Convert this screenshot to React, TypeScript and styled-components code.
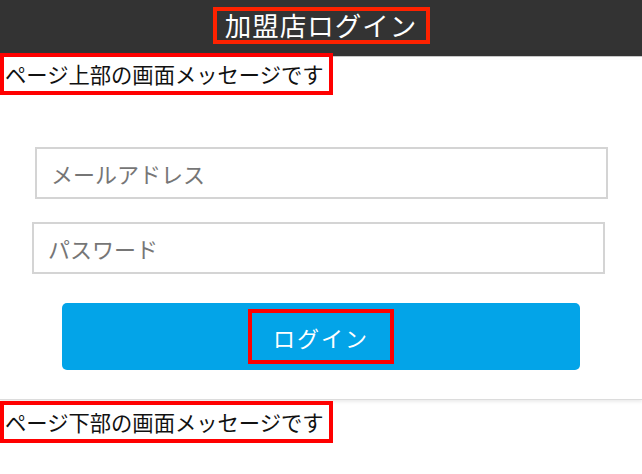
import React, { FC } from 'react'
import styled, { createGlobalStyle } from 'styled-components'

const GlobalStyle = createGlobalStyle`
    html, body {
        margin: 0;
        padding: 0;
        background: #ffffff;
    }
    body {
        font-family: "Noto Sans CJK JP", "Noto Sans", sans-serif;
        color: #222222;
    }
`;

const App: FC = () => {
    return (
        <>
            <GlobalStyle />
            <Header>
                <HeaderTitle>加盟店ログイン</HeaderTitle>
            </Header>
            <Card>
                <Message>ページ上部の画面メッセージです</Message>
                <LoginForm onSubmit={(e) => e.preventDefault()}>
                    <TextInput type="email" placeholder="メールアドレス" $shift={35} />
                    <TextInput type="password" placeholder="パスワード" $shift={32} />
                    <SubmitButton type="submit">
                        <ButtonLabel>ログイン</ButtonLabel>
                    </SubmitButton>
                </LoginForm>
            </Card>
            <Footer>
                <Message>ページ下部の画面メッセージです</Message>
            </Footer>
        </>
    )
}

const Header = styled.header`
    height: 57px;
    background-color: #333333;
    border-bottom: 1px solid #c8c8c8;
    display: flex;
    justify-content: center;
    align-items: flex-start;
    padding-top: 7px;
    box-sizing: border-box;
`;

const HeaderTitle = styled.h1`
    margin: 0;
    box-sizing: border-box;
    width: 217px;
    height: 37px;
    border: 4px solid #ff2200;
    color: #ffffff;
    font-size: 26.5px;
    font-weight: 400;
    line-height: 28px;
    letter-spacing: 1px;
    text-align: center;
    white-space: nowrap;
`;

const Card = styled.main`
    background: #ffffff;
    border-bottom: 1px solid #dcdcdc;
    box-shadow: 0 2px 3px rgba(0, 0, 0, 0.08);
    padding-bottom: 29px;
`;

const Message = styled.p`
    display: inline-block;
    margin: 0 0 0 4px;
    padding: 0 5px 0 1px;
    height: 34px;
    outline: 4px solid #ff0000;
    font-size: 21.3px;
    line-height: 34px;
    color: #111111;
    white-space: nowrap;
    position: relative;
`;

const LoginForm = styled.form`
    display: flex;
    flex-direction: column;
    align-items: flex-start;
    gap: 23px;
    padding-top: 56px;
`;

const TextInput = styled.input<{ $shift: number }>`
    box-sizing: border-box;
    width: 573px;
    height: 52px;
    margin-left: ${({ $shift }) => $shift}px;
    padding: 0 14px;
    border: 2px solid #d4d4d4;
    border-radius: 0;
    outline: none;
    font-family: inherit;
    font-size: 22px;
    color: #333333;
    background: #ffffff;

    &::placeholder {
        color: #767676;
    }
`;

const SubmitButton = styled.button`
    box-sizing: border-box;
    margin: 6px 0 0 62px;
    width: 518px;
    height: 67px;
    border: none;
    border-radius: 5px;
    background-color: #03a4e8;
    display: flex;
    justify-content: center;
    align-items: center;
    cursor: pointer;
    padding: 0;
`;

const ButtonLabel = styled.span`
    box-sizing: border-box;
    display: flex;
    align-items: center;
    justify-content: center;
    width: 146px;
    height: 55px;
    border: 4px solid #ff0000;
    color: #ffffff;
    font-family: "Noto Sans CJK JP", "Noto Sans", sans-serif;
    font-size: 22px;
    letter-spacing: 2px;
`;

const Footer = styled.footer`
    padding: 5px 0 40px;
`;

export default App
